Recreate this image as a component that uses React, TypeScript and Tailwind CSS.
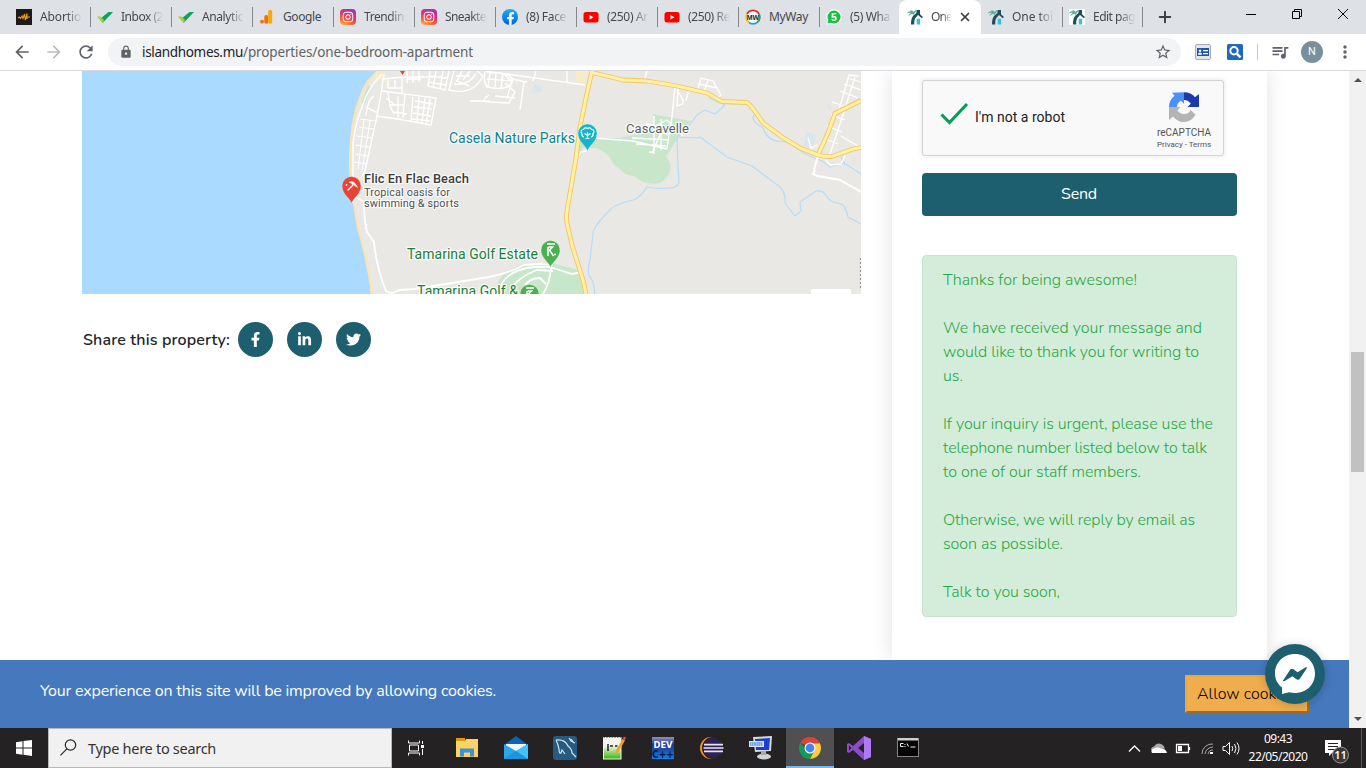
import { useLayoutEffect, useRef, useState, type ReactNode } from "react";
import { FaFacebookF, FaInstagram, FaLinkedinIn, FaTwitter } from "react-icons/fa";
import { MdLock, MdStarBorder, MdQueueMusic, MdArrowBack, MdArrowForward, MdRefresh, MdMoreVert } from "react-icons/md";
import { X, Plus } from "lucide-react";

/** Single line of text whose letter spacing is adjusted so that it spans `w` pixels. */
function Fit({ w, children, className = "" }: { w: number; children: string; className?: string }) {
  const ref = useRef<HTMLSpanElement>(null);
  const [ls, setLs] = useState(0);
  useLayoutEffect(() => {
    if (ref.current) {
      setLs((w - ref.current.getBoundingClientRect().width) / children.length);
    }
  }, [w, children]);
  return (
    <span ref={ref} className={`inline-block whitespace-pre ${className}`} style={{ letterSpacing: `${ls}px` }}>
      {children}
    </span>
  );
}

const Check = () => (
  <svg viewBox="0 0 16 16" className="h-4 w-4">
    <path d="M3.500 9.500L11.500 3H16L5.500 14z" fill="#0aa35a" />
    <path d="M0 7.500h3.500L7 11l-1.500 3z" fill="#a4cf3a" />
  </svg>
);

const Insta = () => (
  <span className="flex h-4 w-4 items-center justify-center rounded-[4px] bg-[linear-gradient(25deg,#fdc04e_0%,#f5642c_30%,#d92e7f_60%,#8a3ac8_100%)]">
    <FaInstagram className="h-3 w-3 text-white" />
  </span>
);

const Youtube = () => (
  <svg viewBox="0 0 16 16" className="h-4 w-4">
    <rect x="0.500" y="3" width="15" height="10.500" rx="2.500" fill="#f00" />
    <path d="M6.500 6v4.500l4-2.250z" fill="#fff" />
  </svg>
);

const House = () => (
  <svg viewBox="0 0 16 16" className="h-4 w-4">
    <path d="M6 7L10.500 3l5.500 5-1.200 1.200L11 6 8 9.500c-.8 2-.8 4-.7 6H4C4 12 4.200 9.500 6 7z" fill="#1d4f5e" />
    <path d="M9.500 1H13v5L9.500 4z" fill="#1d4f5e" />
    <path d="M6.800 6C5.500 4.500 4 4.500 1.500 7.500 1.700 5.500 2.500 4.500 3.800 4 2.500 3.500 1.500 3.700 0 4.500c.8-2 2.500-2.600 4-1.900L3 1.300c2 0 3.200.6 3.700 1.600C7.500 1.500 8.800 1 10.500 1.500 9 2.200 8.500 3 8.300 3.600 7.500 4.500 7 5 6.800 6z" fill="#5fae9e" />
    <rect x="9.700" y="9.700" width="3.400" height="5.800" fill="#3cc0cf" />
  </svg>
);

const tabs: { icon: ReactNode; text: string; w: number }[] = [
  {
    icon: (
      <svg viewBox="0 0 16 16" className="h-4 w-4">
        <rect width="16" height="16" fill="#1b1b1b" />
        <path d="M2 9l1.500-1 1 1.500L6 7l1 2.500 1.500-4.500.8 6L11 4.500V10M9.500 8H14" fill="none" stroke="#f59b14" strokeWidth="1.100" />
      </svg>
    ),
    text: "Abortio",
    w: 41,
  },
  { icon: <Check />, text: "Inbox (2", w: 42 },
  { icon: <Check />, text: "Analytic", w: 41 },
  {
    icon: (
      <svg viewBox="0 0 16 16" className="h-4 w-4">
        <circle cx="3" cy="12.700" r="1.900" fill="#e8710a" />
        <rect x="5.300" y="6" width="3.900" height="8.700" rx="1.900" fill="#e8710a" />
        <rect x="9.200" y="1" width="4" height="13.700" rx="1.500" fill="#f9ab00" />
      </svg>
    ),
    text: "Google",
    w: 38,
  },
  { icon: <Insta />, text: "Trendin", w: 40 },
  { icon: <Insta />, text: "Sneakte", w: 41 },
  {
    icon: (
      <span className="flex h-4 w-4 items-end justify-center overflow-hidden rounded-full bg-[linear-gradient(#18acfe,#0163e0)]">
        <FaFacebookF className="h-[13px] w-[13px] text-white" />
      </span>
    ),
    text: "(8) Face",
    w: 40,
  },
  { icon: <Youtube />, text: "(250) Ar", w: 41 },
  { icon: <Youtube />, text: "(250) Re", w: 42 },
  {
    icon: (
      <svg viewBox="0 0 16 16" className="h-4 w-4">
        <circle cx="8" cy="8" r="7.800" fill="#fff" />
        <path d="M2 5A6.800 6.800 0 0114 5" fill="none" stroke="#e3262b" strokeWidth="1.900" />
        <path d="M14 5A7 7 0 0112 13.500" fill="none" stroke="#2ba24c" strokeWidth="1.900" />
        <path d="M12 13.500a7 7 0 01-8 0" fill="none" stroke="#1b9fe0" strokeWidth="1.900" />
        <path d="M4 13.500A7 7 0 012 5" fill="none" stroke="#f6b81a" strokeWidth="1.900" />
        <text x="8" y="10.500" fontSize="7" fontWeight="700" fontFamily="Liberation Sans, sans-serif" textAnchor="middle" fill="#222">MW</text>
      </svg>
    ),
    text: "MyWay",
    w: 39,
  },
  {
    icon: (
      <svg viewBox="0 0 16 16" className="h-4 w-4">
        <path d="M8 .3a7.700 7.700 0 11-3.700 14.400L.3 15.700l1.200-3.800A7.700 7.700 0 018 .3z" fill="#fff" />
        <circle cx="8" cy="8" r="6.500" fill="#14c143" />
        <path d="M1.500 14.500l1-4 3 3z" fill="#14c143" />
        <text x="8" y="11.700" fontSize="10.500" fontWeight="700" fontFamily="Liberation Sans, sans-serif" textAnchor="middle" fill="#fff">5</text>
      </svg>
    ),
    text: "(5) Wha",
    w: 40,
  },
];

function TabBody({ icon, text, w }: { icon: ReactNode; text: string; w: number }) {
  const fades = text !== "Google" && text !== "MyWay";
  return (
    <div className="flex w-[73px] items-center gap-2">
      {icon}
      <div className={`w-[42px] ${fades ? "[mask-image:linear-gradient(to_right,black_62%,transparent)]" : ""}`}>
        <Fit w={w} className="align-top leading-[18px]">{text}</Fit>
      </div>
    </div>
  );
}

const Separator = () => <div className="h-5 w-px shrink-0 bg-[#85888c]" />;

function TabStrip() {
  return (
    <div className="flex h-[34px] bg-[#dee1e6] pl-2 font-['Noto_Sans','Open_Sans',sans-serif] text-[12px] text-[#45494d]">
      {tabs.map((t, i) => (
        <div key={i} className="flex w-[81px] items-center pl-2">
          <TabBody {...t} />
          {i < 10 && <div className="-mr-px h-5 w-px shrink-0 translate-x-px bg-[#85888c]" />}
        </div>
      ))}
      <div className="flex h-[34px] w-[82px] shrink-0 items-center gap-2 rounded-t-lg bg-white pl-2">
        <House />
        <div className="w-[21px] [mask-image:linear-gradient(to_right,black_50%,transparent)]">
          <Fit w={21} className="align-top leading-[18px]">One</Fit>
        </div>
        <X className="-ml-[2px] h-3.5 w-3.5 text-[#3c4043]" strokeWidth={3} />
      </div>
      <div className="flex w-[81px] shrink-0 items-center pl-[7px]">
        <TabBody icon={<House />} text="One toi" w={41} />
        <div className="ml-auto h-5 w-px shrink-0 translate-x-px bg-[#85888c]" />
      </div>
      <div className="flex w-[81px] shrink-0 items-center pl-[7px]">
        <TabBody icon={<span className="bg-white"><House /></span>} text="Edit pag" w={42} />
        <Separator />
      </div>
      <Plus className="ml-[13px] mt-[8px] h-[18px] w-[18px] text-[#3c4043]" strokeWidth={2.6} />
      <div className="ml-[66px] flex items-center">
        <svg viewBox="0 0 120 34" className="h-[34px] w-[120px]" fill="none" stroke="#000" strokeWidth="1">
          <path d="M6 14.500h10M52.500 11.500h7v7h-7zM54.500 11.500v-2h7v7h-2M98 9l10 10M108 9L98 19" />
        </svg>
      </div>
    </div>
  );
}

function Toolbar() {
  return (
    <div className="flex h-[37px] items-center border-b border-[#d9dadf] bg-white pl-3 text-[#5f6368]">
      <MdArrowBack className="h-5 w-5" />
      <MdArrowForward className="ml-3 h-5 w-5 text-[#babcbe]" />
      <MdRefresh className="ml-3 h-5 w-5" />
      <div className="ml-3 flex h-7 w-[1073px] items-center rounded-full bg-[#f1f3f4] pl-[11px] font-['Noto_Sans','Open_Sans',sans-serif] text-[13.500px]">
        <MdLock className="h-[14px] w-[14px]" />
        <div className="ml-[9px] flex">
          <Fit w={101} className="text-[#202124]">islandhomes.mu</Fit>
          <Fit w={230}>/properties/one-bedroom-apartment</Fit>
        </div>
        <MdStarBorder className="ml-[681px] h-[18px] w-[18px]" />
      </div>
      <svg viewBox="0 0 16 16" className="ml-[14px] h-4 w-4">
        <rect x=".5" y=".5" width="15" height="15" rx="1.500" fill="#e4e6ea" stroke="#a8abb0" />
        <path d="M2 4h12v8H2z" fill="#1c56a8" />
        <circle cx="5" cy="6.700" r="1.300" fill="#fff" />
        <path d="M3 10.800c0-3 4-3 4 0zM8 6h5v1.300H8zM8 9h5v1.300H8z" fill="#fff" />
      </svg>
      <svg viewBox="0 0 16 16" className="ml-4 h-4 w-4">
        <rect width="16" height="16" rx="1.500" fill="#1f68c0" />
        <circle cx="7" cy="6.800" r="3.700" fill="none" stroke="#fff" strokeWidth="2" />
        <path d="M9.800 9.600l3.700 3.700" stroke="#fff" strokeWidth="2.400" />
      </svg>
      <div className="ml-[14px] h-4 w-px bg-[#c9cbce]" />
      <MdQueueMusic className="ml-[12px] h-5 w-5" />
      <div className="ml-[11px] flex h-[22px] w-[22px] items-center justify-center rounded-full bg-[#78909c] font-['Roboto',sans-serif] text-[11px] text-white">N</div>
      <MdMoreVert className="ml-[12px] h-5 w-5" />
    </div>
  );
}

function Pin({ x, y, color, children }: { x: number; y: number; color: string; children?: ReactNode }) {
  return (
    <g transform={`translate(${x} ${y})`}>
      <path d="M0 0C-1-5-9.500-9-9.500-17.500a9.500 9.500 0 0119 0C9.500-9 1-5 0 0z" fill={color} stroke="#fff" strokeOpacity=".5" strokeWidth=".6" />
      <g transform="translate(0 -17.500)" stroke="#fff" fill="none" strokeWidth="1.400">{children}</g>
    </g>
  );
}

const yellowRoads = [
  "M592 71L587 93L580 127L576 158L567 211Q566 218 567 223L572 245L583 280L586 294",
  "M590 72L623 80L647 81L677 86L707 93L722 101.500L747 102.500Q752 106 763 123L782 137L800 148L818 155Q826 157 832 156.500L853 149L861 147.500",
  "M818 155L828 133L835 113.500L861 100.500",
];

function MapView() {
  return (
    <svg viewBox="82 71 779 223" className="block h-[223px] w-[779px] bg-[#eae8e4]">
      <path d="M82 71H378Q365 82 361 95Q353 114 351 140Q349 165 351 180Q353 200 358 228Q368 262 371 294H82z" fill="#aadaff" />
      <path d="M378 71Q365 82 361 95Q353 114 351 140Q349 165 351 180Q353 200 358 228Q368 262 372 294" fill="none" stroke="#fbe4ae" strokeWidth="2.200" />
      <path d="M376 72l10 0 0 12-4 -5-9 4z" fill="#f8ebc8" />
      <path d="M368 85l3 2-6 16h-4z" fill="#c9e6cb" />
      <path d="M576 71h12l-4 13q-8 0-8-5z" fill="#f8ebc8" />
      <path d="M534 84l8 2-1 6-9 1zM806 131l10 4-3 13-9-2zM826 103l6 4-2 3z" fill="#dbe5ee" />
      <path d="M653 114l38 7-14 18-11 18q6 6 4 14-3 8-10 12-8 2-17-1l-9-6q-9 0-14-7-8-4-10-12-6-6-14-9h-14v6h-8l2-16 10-1 15 1 18 0 20-4 14-7z" fill="#c8e6c9" />
      <path d="M500 294l-3-10q6-14 27-20l28-1 26 7 6 24z" fill="#c8e6c9" />
      <g fill="none" stroke="#b6dcf9" strokeWidth="1.200" strokeLinejoin="round">
        <path d="M709 98l16 7-10 9-10-4-8 5-9 12-11 10 1 30 1 16q-3 5-9 5-14 1-23-1-6 10-14 13-20 5-23 10-18 18-17 24l-3 26q-4 15 1 18 5 9 3 24" />
        <path d="M677 137l21 1 2-1 27 20 25 9 28 21q6 6 5 16l10 13 6-5-1-9 16-11q6-1 9 3 5 9 13 9 8 1 10 14l13 7" />
        <path d="M755 114q-6 6 8 14 5 14 17 13l10 2 15 11 17 7 8 6 14-4 17 11" />
        <path d="M841 157l4 8" />
      </g>
      <g fill="none" stroke="#fff" strokeWidth="1.400">
        <path d="M382 74q-14 14-19 30-8 20-10 40l0 40M384 74l-3 20-4 22-12 55-5 8M382 79l23-2 30 0M382 91l54 7-5 27-33-6-22-3" />
        <path d="M360 119l15 2M359 127l14 2M357 136l15 2M356 145l14 2M355 154l13 2M354 162l13 2M364 119l-6 50M370 121l-8 50" strokeWidth="1.100" />
        <path d="M366 115q2-16 8-19M366 107l12 6M388 93l2 13 4 8M398 96v22M405 94l-2 24M413 97l-2 24M419 97l-2 25M425 98l-3 26M430 99l-4 26M390 105h14M393 112l14 2M415 101l18 3M414 107l18 2M413 113l18 3M412 119l18 2M386 98l8 6" />
        <path d="M402 73v20M388 78v10h14v-7M395 80v8M407 71v12M413 71v12M419 71v11M407 79h14M430 71l-2 15 17 4 4-19M436 71l-3 17M443 71l-3 18M429 76l18 2M428 82l18 3M454 71l-5 19q24 6 34-14l-6-5M456 76q8 0 14 0M454 84q14 2 22-10M462 71l-5 10 12 5M470 71l-7 9" />
        <path d="M485 72q-2 10 2 15 18 4 24-3 6-7-10-11l-14-1M490 72l-2 15M496 72l-1 15M503 73l-2 15M487 79l24 2M504 74l7 7M511 79l16 3M489 95q-10 7 0 7l20 1 6-11-10-9M495 96l20 2M513 78l-6 20M470 101l20 0M524 82l-4 28M485 71l100 14M567 71v11M536 71l-3 10" />
        <path d="M647 71l-3 10M675 87l-3 30-5 31M678 88l-1 18 6-2 0-4-4-7M688 92l-2 9M697 92l4-14 12 3 8 14-7 5M699 84l18 4M708 80l-4 12M593 138l40 3 34 8M640 134l27-14 16 16M654 116v37l-5-1M661 119v31M632 138l37 2M636 144l30 2M645 130l24 4M646 124l22 4M660 135l-8 18" />
        <path d="M353 203l3-6 8 5q0 18 3 30l7 10q2 24 12 49l6 2 8-3 15-1 74-12q20-4 35-12l16-1 13 1M367 224l-2 5M550 267l22 7 11-2M551 267q-1 16-8 27M500 287q8-18 35-20h16M510 290q8-13 27-20l16 1M525 286q4-8 15-8l6 6" strokeWidth="1.800" />
        <path d="M577 158l4-6 8-2" />
        <path d="M815 170l-2 4 5 2 22 4 21 12M818 156l-4 14" strokeWidth="2" />
        <path d="M859 76l-10-1-10 35M861 82l-14-4M861 90l-17-6M858 98l-18-7M855 77l-16 50-10 30M849 108l-17-6M845 120l-14-5M842 132l-15-6M838 144l-15-6M841 136l20 12M826 160l4 5 11-1 4-8M808 138l3 10 6-3" strokeWidth="1.300" />
      </g>
      <g fill="none" strokeLinejoin="round">
        {yellowRoads.map((d) => <path key={d} d={d} stroke="#f1c760" strokeWidth="4.800" />)}
        {yellowRoads.map((d) => <path key={d} d={d} stroke="#fff0a5" strokeWidth="3" />)}
      </g>
      <path d="M860.500 258v30" stroke="#888" strokeDasharray="2 2" />
      <rect x="811" y="289" width="40" height="10" rx="1.500" fill="#fff" />
      <path d="M400 71h5l-2.500 4z" fill="#ea4335" />
      <Pin x={351.500} y={203.500} color="#ea4335">
        <path d="M-4 4.500L1.500-1" />
        <path d="M-2.500-3.500Q2-7 6 1.500 4.500-.5 3.500 0 3-2 1-1.200 .5-3.800-2.500-3.500z" fill="#fff" strokeWidth=".6" />
        <circle cx="-5" cy="-1" r=".9" fill="#fff" stroke="none" />
      </Pin>
      <Pin x={587.500} y={151} color="#12b5cb">
        <path d="M0 5V-1M0 2l-3-2M0 2l3-2M-2 5h4M-5.500 0a2.200 2.200 0 011.500-4 2.500 2.500 0 014-1 2.500 2.500 0 014 1 2.200 2.200 0 011.500 4q.5 3-2 3.500M-5.500 0q-.5 3 2 3.500" strokeWidth="1.200" />
      </Pin>
      <Pin x={550.500} y={267.500} color="#4caf50">
        <path d="M-3.500-6h8M-2.500-3v9M-2-3l4 0-3 3 4 6" strokeWidth="1.500" />
        <circle cx="4.500" cy="4.500" r="1" fill="#fff" stroke="none" />
      </Pin>
      <Pin x={529.500} y={311.500} color="#4caf50">
        <path d="M-3.500-6h8M-2.500-3v9M-2-3l4 0-3 3 4 6" strokeWidth="1.500" />
      </Pin>
      <g fontFamily="Roboto, sans-serif" stroke="#fff" strokeWidth="2.500" strokeOpacity=".8" strokeLinejoin="round" paintOrder="stroke">
        <text x="449" y="143" fontSize="14" fill="#0d8390" textLength="126">Casela Nature Parks</text>
        <text x="626" y="133" fontSize="13" fill="#5b5f66" textLength="63">Cascavelle</text>
        <text x="364" y="183" fontSize="13" fontWeight="500" fill="#3c3c3c" textLength="105">Flic En Flac Beach</text>
        <text x="364" y="196" fontSize="11" fill="#505050" textLength="86">Tropical oasis for</text>
        <text x="364" y="207" fontSize="11" fill="#505050" textLength="95">swimming &amp; sports</text>
        <text x="407" y="259" fontSize="14" fill="#188038" textLength="131">Tamarina Golf Estate</text>
        <text x="417" y="296" fontSize="14" fill="#188038" textLength="101">Tamarina Golf &amp;</text>
      </g>
    </svg>
  );
}

function Recaptcha() {
  return (
    <div className="flex h-[76px] w-[302px] items-center rounded-[3px] border border-[#d3d3d3] bg-[#f9f9f9] font-['Roboto',sans-serif] shadow-[0_0_4px_1px_rgba(0,0,0,0.08)]">
      <svg viewBox="0 0 30 24" className="mb-[11px] ml-4 h-6 w-[30px]">
        <path d="M2.500 13.500l8 8L28 3" fill="none" stroke="#009e55" strokeWidth="3" />
      </svg>
      <Fit w={90} className="mb-px ml-[6px] text-[14px] text-[#222]">I'm not a robot</Fit>
      <div className="ml-auto mr-[11px] mt-[6px] flex w-[56px] flex-col items-center">
        <svg viewBox="0 0 30 30" className="h-[30px] w-[30px]">
          <path d="M15 .3C19.500.3 23.500 2 26 5.200L30 2v13H18.500l3.300-3.200C20.500 9.500 18 8 15 8z" fill="#1c3aa9" />
          <path d="M15 .3v11.500l-3-3C9.500 10 8 12 8 15H0C0 10.500 1.800 6.500 5.500 3.700L3 .8z" fill="#4c8ff7" />
          <path d="M0 15h11.500l-3 3.200C10 20.700 12 22 15 22c3.200 0 5.500-1.300 6.700-4l4.800 4.800C24 27.200 20 30 15 30c-4.500 0-8.500-2-11-5.500L0 28z" fill="#b4b4b4" />
        </svg>
        <Fit w={54} className="mt-[4px] text-[10px] leading-[13px] text-[#555]">reCAPTCHA</Fit>
        <Fit w={54} className="text-[8px] leading-[12px] text-[#555]">Privacy - Terms</Fit>
      </div>
    </div>
  );
}

const message: ([string, number] | null)[] = [
  ["Thanks for being awesome!", 194],
  null,
  ["We have received your message and", 259],
  ["would like to thank you for writing to", 256],
  ["us.", 20],
  null,
  ["If your inquiry is urgent, please use the", 270],
  ["telephone number listed below to talk", 264],
  ["to one of our staff members.", 198],
  null,
  ["Otherwise, we will reply by email as", 252],
  ["soon as possible.", 120],
  null,
  ["Talk to you soon,", 117],
];

function ContactCard() {
  return (
    <aside className="ml-[31px] h-full w-[375px] bg-white px-[30px] pt-[9px] shadow-[0_0_20px_rgba(0,0,0,0.12)]">
      <Recaptcha />
      <button className="mt-[17px] flex h-[43px] w-full items-center justify-center rounded bg-[#1d5f6f] pb-[2px] pr-px text-white">
        <Fit w={36}>Send</Fit>
      </button>
      <div className="mt-[39px] rounded border border-[#c3e6cb] bg-[#d4edda] px-5 py-3 font-light text-[#28a745]">
        {message.map((line, i) => (
          <div key={i} className="h-6 leading-6">
            {line && <Fit w={line[1]}>{line[0]}</Fit>}
          </div>
        ))}
      </div>
    </aside>
  );
}

function ShareRow() {
  return (
    <div className="mt-7 flex items-center pl-px text-white">
      <Fit w={147} className="mr-[8px] font-semibold text-[#212529]">Share this property:</Fit>
      {[FaFacebookF, FaLinkedinIn, FaTwitter].map((Icon, i) => (
        <a key={i} className="mr-[14px] flex h-[35px] w-[35px] items-center justify-center rounded-full bg-[#1d5f6f]">
          <Icon className="h-[15px] w-[15px]" />
        </a>
      ))}
    </div>
  );
}

function Page() {
  return (
    <main className="relative flex h-[657px] font-['Nunito','Lato',sans-serif] text-[16px]">
      <div className="flex w-[1349px] flex-col bg-white">
        <div className="flex h-[589px] overflow-hidden pl-[82px]">
          <div className="w-[779px]">
            <MapView />
            <ShareRow />
          </div>
          <ContactCard />
        </div>
        <div className="flex h-[68px] justify-between bg-[#4678bd] pl-10 pr-10 text-white">
          <Fit w={456} className="mt-[19px] h-6 leading-6">Your experience on this site will be improved by allowing cookies.</Fit>
          <button className="mt-[15px] flex h-[38px] w-[124px] items-center border-2 border-b-[#a06c20] border-l-[#f0a63c] border-r-[#a06c20] border-t-[#f0a63c] bg-[#f0ad4e] pl-[10px] font-light text-black">
            <Fit w={99}>Allow cookies</Fit>
          </button>
        </div>
      </div>
      <div className="flex w-[17px] flex-col items-center bg-[#f1f1f1] py-[7px]">
        <svg viewBox="0 0 8 4" className="h-1 w-2"><path d="M0 4l4-4 4 4z" fill="#505050" /></svg>
        <div className="mt-[270px] h-[120px] w-[13px] bg-[#c1c1c1]" />
        <svg viewBox="0 0 8 4" className="mt-auto h-1 w-2"><path d="M0 0l4 4 4-4z" fill="#505050" /></svg>
      </div>
      <div className="absolute left-[1265px] top-[573px] h-[60px] w-[60px] rounded-full shadow-[0_1px_10px_rgba(0,0,0,0.2)]">
        <svg viewBox="0 0 60 60" className="h-[60px] w-[60px]">
          <circle cx="30" cy="30" r="30" fill="#1d5f6f" />
          <path d="M30 10c11.300 0 20 8.300 20 19.500S41.300 49 30 49c-2 0-4-.3-5.800-.8L17 50v-6.500c-4.300-3.500-7-8-7-14C10 18.300 18.700 10 30 10z" fill="#fff" />
          <path d="M18 36.500l7-10.500q1.500-2 3.500-.7l4 3L40.800 23.300q1.700-.5 1 .9L35 34.500q-1.500 2-3.500.7l-4-3L19.200 37.200q-1.500.4-1.200-.7z" fill="#1d5f6f" />
        </svg>
      </div>
    </main>
  );
}

const taskIcons: ReactNode[] = [
  <g key="explorer">
    <path d="M1 2h9v4H1z" fill="#d99a0b" /><path d="M1 5h9l1-2h12v18H1z" fill="#fcd265" />
    <path d="M5 20.500v-8h14v8h-4v-4H9v4z" fill="#3a92dc" />
  </g>,
  <g key="mail">
    <path d="M0 9L12 0l12 9v3H0z" fill="#0a64b4" /><path d="M2 8h20v8H2z" fill="#f3f3f3" />
    <path d="M0 8l12 7 12-7v15H0z" fill="#27a6ea" /><path d="M12 15l12-7v15z" fill="#3fc4f7" /><path d="M0 23l12-8 12 8z" fill="#1c95df" />
  </g>,
  <g key="dolphin">
    <rect width="24" height="24" rx="3" fill="#265a80" />
    <path d="M3 4q9-1 12 6 4 3 4 7l4 4M3 4q2 4 3 9 0 5 2 4l1-3 3 4M16 2l2 3 4 2M18 3l3 4" fill="none" stroke="#d8e6f0" strokeWidth="1.200" />
  </g>,
  <g key="notepad">
    <defs>
      <linearGradient id="page" x1="0" y1="0" x2="0" y2="1">
        <stop offset="0.350" stopColor="#f4f4ee" /><stop offset="1" stopColor="#3dba0c" />
      </linearGradient>
    </defs>
    <rect x="1" y="1" width="18.500" height="22.500" fill="#f4f4ee" /><rect x="2" y="3" width="16.500" height="19.500" fill="url(#page)" />
    <path d="M1.500 1.500h18" stroke="#888" strokeDasharray="1.500 1.200" />
    <path d="M6 8v7M8 10h3M13 10h2.500" stroke="#222" strokeWidth="1.500" /><path d="M20.500 3l-7 12-.5 4 3-2.500L23 4.500z" fill="#f2a324" /><path d="M20.500 3l1.500-2.500 2 1-1.200 3z" fill="#b85a50" />
  </g>,
  <g key="dev" fontFamily="DejaVu Sans, sans-serif" fontWeight="700">
    <defs>
      <linearGradient id="blue" x1="0" y1="0" x2="0" y2="1">
        <stop offset="0" stopColor="#8c93c0" /><stop offset="0.350" stopColor="#23338c" /><stop offset="1" stopColor="#1580e0" />
      </linearGradient>
    </defs>
    <rect x="1" y="1" width="22" height="22" fill="url(#blue)" />
    <text x="12" y="12" fontSize="9.500" textAnchor="middle" textLength="19" lengthAdjust="spacingAndGlyphs" fill="#fff">DEV</text>
    <text x="12" y="22" fontSize="10" textAnchor="middle" textLength="22" lengthAdjust="spacingAndGlyphs" fill="#061c4a">C++</text>
  </g>,
  <g key="eclipse">
    <circle cx="11" cy="12" r="11" fill="#f7941e" /><circle cx="13" cy="12" r="11" fill="#231f20" /><circle cx="13.500" cy="12" r="10" fill="#2c2255" />
    <path d="M4 8.700h19M3.500 12h20M4 15.300h19" stroke="#e8e6f2" strokeWidth="1.700" />
  </g>,
  <g key="terminal">
    <path d="M4 1l19-1-1 15-16 1z" fill="#d7dbe0" /><path d="M6 3l15-1-1 12-13 0z" fill="#1c3fd0" /><ellipse cx="15" cy="20.500" rx="7" ry="3" fill="#cfd2d6" />
    <path d="M0 5h15v6H0z" fill="#e4e8ee" /><path d="M1 7h13M1 9h13" stroke="#3a8ad8" strokeWidth="1.400" strokeDasharray="1.500 .6" /><path d="M12 15h5v4h-5z" fill="#aaa" />
  </g>,
  <g key="chrome">
    <path d="M12 12L2.470 6.500a11 11 0 0119.060 0z" fill="#db4437" /><path d="M12 7h9.780A11 11 0 0112 23l4.300-8.500z" fill="#ffcd40" />
    <path d="M2.470 6.500L7.670 14.500 12 17l3.500-1.500L12 23A11 11 0 012.470 6.500z" fill="#0f9d58" />
    <path d="M2.470 6.500H21.530V7.500H12z" fill="#db4437" />
    <circle cx="12" cy="12" r="5.500" fill="#fff" /><circle cx="12" cy="12" r="4.400" fill="#4285f4" />
  </g>,
  <g key="vs">
    <path d="M17 0l7 3v18l-7 3L6 14l-4 3-2-1V8l2-1 4 3z" fill="#8d4cc9" /><path d="M17 0l7 3v18l-7 3z" fill="#b179f1" />
    <path d="M17 7v10l-6-5zM2 9.500v5L4.500 12z" fill="#252323" />
  </g>,
  <g key="cmd">
    <rect x="1.500" y="2.500" width="21" height="18" fill="#050505" stroke="#888" /><path d="M2 2h20v2.500H2z" fill="#cfcfcf" />
    <path d="M4.500 7.500h3M4.500 10.500h3M4.500 7.500v3M9 8v1M9 10v1M11 7.500l1.500 3M14.500 11h5" stroke="#eee" strokeWidth="1" />
  </g>,
];

function Taskbar() {
  return (
    <footer className="flex h-10 bg-[#242222] font-['Noto_Sans','Open_Sans',sans-serif] text-white">
      <div className="flex w-12 items-center pl-4">
        <svg viewBox="0 0 16 16" className="h-4 w-4" fill="#fff">
          <path d="M0 2.200L6.500 1.300V7.500H0zM7.500 1.100L16 0v7.500H7.500zM0 8.500h6.500v6.200L0 13.800zM7.500 8.500H16V16l-8.500-1.200z" />
        </svg>
      </div>
      <div className="flex w-[344px] items-center border border-[#b9b9b9] bg-[#f1f1f1] pl-[11px] text-[14.500px] text-[#333]">
        <svg viewBox="0 0 17 17" className="mb-[2px] h-[17px] w-[17px]" fill="none" stroke="#262626" strokeWidth="1.200">
          <circle cx="10.500" cy="6" r="5.200" /><path d="M6.800 9.800L.5 16.300" />
        </svg>
        <Fit w={128} className="ml-[11px] mt-[2px]">Type here to search</Fit>
      </div>
      <div className="mr-[3px] flex w-12 items-center justify-center">
        <svg viewBox="0 0 17 16" className="h-4 w-[17px]" fill="none" stroke="#fff" strokeWidth="1">
          <path d="M.5 .5v2.500h11V.5M.5 15.500v-2.500h11V15.500M1.500 5h9v6h-9zM14.500 1v3M14.500 9v6" /><path d="M13 5h3v3h-3z" fill="#fff" stroke="none" />
        </svg>
      </div>
      {taskIcons.map((icon, i) => (
        <div key={i} className={`mr-px flex w-12 items-center justify-center ${i === 7 ? "border-b-2 border-[#76b9ed] bg-[#505050] pt-[2px]" : ""}`}>
          <svg viewBox="0 0 24 24" className="h-6 w-6 overflow-visible">{icon}</svg>
        </div>
      ))}
      <svg viewBox="0 0 116 40" className="ml-[192px] h-10 w-[116px]" fill="none" stroke="#fff" strokeWidth="1.300">
        <path d="M4 23.500l5.500-5.500 5.500 5.500" />
        <path d="M26 22q0-3 3-3.500 3-5 8-2 2 1 3 4z" fill="#aaa" stroke="none" />
        <path d="M27 25q-2-3 2-4.500 4-2 7 0 5 0 6 4.500z" fill="#fff" stroke="none" />
        <path d="M51.500 16.500h12v8h-12zM64.500 19v3" /><path d="M53 18h4v5h-4z" fill="#fff" stroke="none" />
        <g stroke="#aaa" strokeWidth="1"><path d="M77 26a10 10 0 0111-10M80 26a8 8 0 018-7M83 26a5 5 0 015-4" /></g><path d="M85 24h3v2h-3z" fill="#fff" stroke="none" />
        <path d="M98 18.500h2.500l4-4v12l-4-4H98zM107 18q1.500 2.500 0 5M109.500 16q3 4.500 0 9M112 14.500q4 6 0 12" strokeWidth="1" />
      </svg>
      <div className="flex w-[72px] flex-col items-center justify-center pl-[2px] text-[12px] leading-[18px]">
        <Fit w={28}>09:43</Fit>
        <Fit w={59}>22/05/2020</Fit>
      </div>
      <svg viewBox="0 0 40 40" className="ml-[5px] h-10 w-10">
        <path d="M7 12h16v13H14l-3 3v-3H7z" fill="#fff" /><path d="M10 15.500h10M10 18.500h10M10 21.500h7" stroke="#242222" />
        <circle cx="22.500" cy="27" r="8" fill="#3a3838" stroke="#999" />
        <text x="22.500" y="31" fontSize="11" fontWeight="600" fontFamily="Noto Sans, sans-serif" textAnchor="middle" fill="#fff">11</text>
      </svg>
      <div className="ml-auto mr-[4px] h-10 w-px bg-[#5a5858]" />
    </footer>
  );
}

export default function App() {
  return (
    <div className="h-[768px] w-[1366px] overflow-hidden bg-white">
      <TabStrip />
      <Toolbar />
      <Page />
      <Taskbar />
    </div>
  );
}
